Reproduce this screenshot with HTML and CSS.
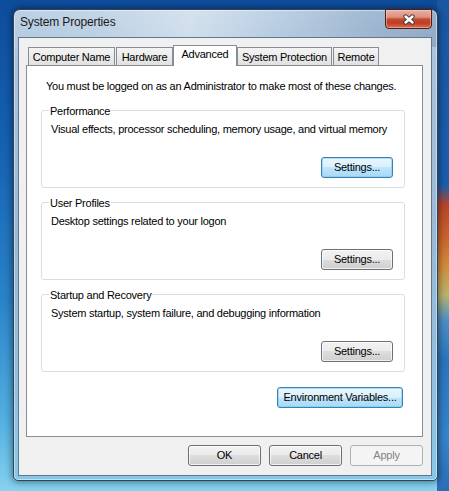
FILE: index.html
```html
<!DOCTYPE html>
<html lang="en">
<head>
<meta charset="utf-8">
<title>System Properties</title>
<link rel="stylesheet" href="styles.css">
</head>
<body>
<div class="desktop">
  <div class="window">
    <div class="titlebar">
      <span class="title">System Properties</span>
      <button class="close" aria-label="Close">
        <svg width="14" height="11" viewBox="0 0 14 11">
          <path d="M3.5 2.5 L10.5 8.5 M10.5 2.5 L3.5 8.5" stroke="#4d3f3f" stroke-width="4.4" stroke-linecap="round" fill="none"/>
          <path d="M3.5 2.5 L10.5 8.5 M10.5 2.5 L3.5 8.5" stroke="#ffffff" stroke-width="2.4" stroke-linecap="round" fill="none"/>
        </svg>
      </button>
    </div>
    <div class="client">
      <div class="tabs">
        <div class="tab tab-cn">Computer Name</div>
        <div class="tab tab-hw">Hardware</div>
        <div class="tab tab-adv tab-selected">Advanced</div>
        <div class="tab tab-sp">System Protection</div>
        <div class="tab tab-rm">Remote</div>
      </div>
      <div class="panel">
        <p class="note">You must be logged on as an Administrator to make most of these changes.</p>
        <div class="group">
          <span class="group-label">Performance</span>
          <p class="group-desc">Visual effects, processor scheduling, memory usage, and virtual memory</p>
          <div class="group-actions"><button class="btn btn-default">Settings...</button></div>
        </div>
        <div class="group">
          <span class="group-label">User Profiles</span>
          <p class="group-desc">Desktop settings related to your logon</p>
          <div class="group-actions"><button class="btn">Settings...</button></div>
        </div>
        <div class="group">
          <span class="group-label">Startup and Recovery</span>
          <p class="group-desc">System startup, system failure, and debugging information</p>
          <div class="group-actions"><button class="btn">Settings...</button></div>
        </div>
        <div class="panel-actions"><button class="btn btn-default btn-wide">Environment Variables...</button></div>
      </div>
      <div class="dialog-actions">
        <button class="btn btn-dialog">OK</button>
        <button class="btn btn-dialog">Cancel</button>
        <button class="btn btn-dialog btn-disabled" disabled>Apply</button>
      </div>
    </div>
  </div>
</div>
</body>
</html>
```
FILE: styles.css
```css
* { box-sizing: border-box; }

body {
  margin: 0;
  width: 449px;
  height: 491px;
  overflow: hidden;
  font-family: "Liberation Sans", Arial, sans-serif;
  font-size: 11px;
  line-height: 13px;
  letter-spacing: -0.25px;
  white-space: nowrap;
  color: #000;
  background:
    linear-gradient(to bottom, #1a57a3 0, #1c5dab 185px, #b8452a 205px, #c9602e 235px, #d28a3a 265px, #b9b46a 295px, #4d8fc4 320px, #2a75bf 360px, #3584cc 440px, #2a6db5 491px) right top / 12px 100% no-repeat,
    linear-gradient(to bottom, #0e4c9c 0, #1562b2 150px, #2a83c8 300px, #52afe0 420px, #86d2ef 491px);
}

.desktop {
  padding: 9px 0 0 13px;
}

.window {
  width: 425px;
  height: 472px;
  border: 1px solid #2f4359;
  border-radius: 7px 7px 5px 5px;
  padding: 0 5px 4px 4px;
  display: flex;
  flex-direction: column;
  box-shadow: 0 0 7px 1px rgba(0, 0, 0, 0.45), inset 0 0 0 1px rgba(255, 255, 255, 0.45);
  background:
    linear-gradient(to right, rgba(255,255,255,0.05) 0, rgba(255,255,255,0.15) 20%, rgba(255,255,255,0.4) 42%, rgba(255,255,255,0.1) 60%, rgba(0,40,90,0.12) 85%, rgba(0,40,90,0.18) 100%) left top / 100% 37px no-repeat,
    linear-gradient(to bottom, #b9cee3 0, #aac3dc 50px, #9ab8d6 220px, #90bfe0 380px, #86c8ea 470px);
}

.titlebar {
  height: 27px;
  display: flex;
  justify-content: space-between;
  align-items: flex-start;
  padding-left: 2px;
}

.title {
  font-size: 12px;
  line-height: 15px;
  padding-top: 5px;
  color: #1a1a1a;
  letter-spacing: -0.15px;
}

.close {
  width: 47px;
  height: 20px;
  margin-top: -1px;
  padding: 0;
  border: 1px solid #4a211a;
  border-radius: 0 0 4px 4px;
  display: flex;
  align-items: center;
  justify-content: center;
  background: linear-gradient(to bottom, #e9b0a4 0, #de917f 40%, #c74a31 50%, #bd3c24 72%, #d8704f 100%);
  box-shadow: inset 0 0 0 1px rgba(255, 220, 210, 0.45);
}

.client {
  height: 439px;
  border: 1px solid #63778c;
  background: #f0f0f0;
  padding: 7px 8px 0 7px;
  display: flex;
  flex-direction: column;
}

.tabs {
  display: flex;
  align-items: flex-end;
  height: 20px;
  padding-left: 2px;
}

.tab {
  height: 18px;
  border: 1px solid #898c95;
  border-bottom: 0;
  background: linear-gradient(to bottom, #f4f4f4 0, #ececec 45%, #e0e0e0 100%);
  text-align: center;
  padding-top: 3px;
}

.tab-selected {
  height: 21px;
  margin-bottom: -1px;
  padding-top: 2px;
  background: #fff;
  position: relative;
  z-index: 1;
}

.tab-cn { width: 87px; margin-right: 1px; }
.tab-hw { width: 57px; }
.tab-adv { width: 64px; }
.tab-sp { width: 95px; margin-right: 1px; }
.tab-rm { width: 46px; }

.panel {
  height: 372px;
  border: 1px solid #898c95;
  background: #fff;
  padding: 14px 17px 0 14px;
  display: flex;
  flex-direction: column;
}

.note {
  margin: 0 0 17px 5px;
}

.group {
  position: relative;
  height: 78px;
  border: 1px solid #d5dfe5;
  border-radius: 3px;
  padding: 12px 11px 9px 9px;
  display: flex;
  flex-direction: column;
  margin-bottom: 14px;
}

.group-label {
  position: absolute;
  top: -6px;
  left: 7px;
  padding: 0 1px;
  background: #fff;
}

.group-desc {
  margin: 0;
}

.group-actions {
  margin-top: auto;
  display: flex;
  justify-content: flex-end;
}

.btn {
  width: 72px;
  height: 21px;
  padding: 0;
  border: 1px solid #707070;
  border-radius: 3px;
  background: linear-gradient(to bottom, #f2f2f2 0, #ebebeb 50%, #dddddd 50%, #cfcfcf 100%);
  box-shadow: inset 0 0 0 1px rgba(255, 255, 255, 0.7);
  font: inherit;
  letter-spacing: inherit;
  color: #000;
  text-align: center;
}

.btn-default {
  border-color: #3c7fb1;
  background: linear-gradient(to bottom, #eaf6fd 0, #d9f0fc 50%, #bee6fd 50%, #a7d9f5 100%);
  box-shadow: inset 0 0 0 1px rgba(120, 200, 240, 0.55);
}

.btn-wide { width: 126px; }

.panel-actions {
  display: flex;
  justify-content: flex-end;
  margin-top: 1px;
  padding-right: 2px;
}

.dialog-actions {
  display: flex;
  justify-content: flex-end;
  gap: 8px;
  margin-top: 8px;
}

.btn-dialog { width: 73px; }

.btn-disabled {
  border-color: #adb2b5;
  background: #f4f4f4;
  color: #838383;
  box-shadow: none;
}
```
